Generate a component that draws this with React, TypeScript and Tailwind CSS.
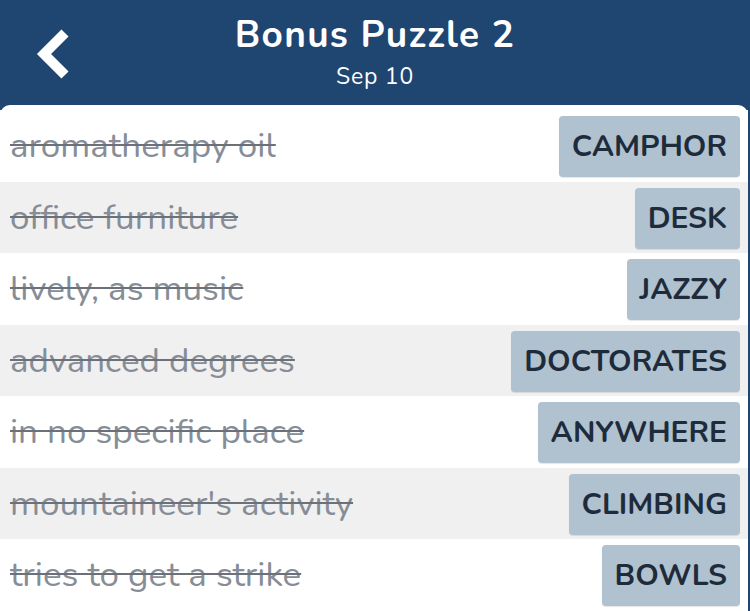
import React from "react";

const rows = [
  { clue: "aromatherapy oil", answer: "CAMPHOR" },
  { clue: "office furniture", answer: "DESK" },
  { clue: "lively, as music", answer: "JAZZY" },
  { clue: "advanced degrees", answer: "DOCTORATES" },
  { clue: "in no specific place", answer: "ANYWHERE" },
  { clue: "mountaineer's activity", answer: "CLIMBING" },
  { clue: "tries to get a strike", answer: "BOWLS" },
];

export default function App() {
  return (
    <div
      className="w-[750px] h-[611px] overflow-hidden bg-[#1f4571] flex flex-col"
      style={{ fontFamily: "Nunito, 'Open Sans', Lato, sans-serif" }}
    >
      <div className="h-[105px] shrink-0 relative flex flex-col items-center text-white">
        <svg
          className="absolute left-[33px] top-[28px]"
          width="42"
          height="54"
          viewBox="0 0 42 54"
        >
          <path
            d="M32 5 L11 26 L32 47"
            fill="none"
            stroke="white"
            strokeWidth="10"
            strokeLinecap="butt"
            strokeLinejoin="miter"
          />
        </svg>
        <div className="mt-[12px] text-[37px] leading-[46px] font-bold tracking-[1.3px]">
          Bonus Puzzle 2
        </div>
        <div className="mt-[5px] text-[23px] leading-[28px] tracking-[0.8px]">Sep 10</div>
      </div>
      <div className="flex-1 bg-white rounded-t-[10px] mr-[2px] pt-[5px] flex flex-col">
        {rows.map((r, i) => (
          <div
            key={i}
            className={
              "h-[71.5px] shrink-0 flex items-start justify-between pl-[10px] pr-[8px] " +
              (i % 2 === 1 ? "bg-[#f0f0f0]" : "bg-white")
            }
          >
            <span className="mt-[16px] whitespace-nowrap text-[35px] leading-[40px] text-[#878d96] line-through decoration-[#6b7079] decoration-[2px]">
              {r.clue}
            </span>
            <span className="mt-[6px] h-[61px] flex items-center px-[13px] bg-[#b0c1cf] rounded-[4px] shadow-[0_1px_1px_rgba(0,0,0,0.1)] text-[30px] font-bold text-[#1d2b3b]">
              {r.answer}
            </span>
          </div>
        ))}
      </div>
    </div>
  );
}
